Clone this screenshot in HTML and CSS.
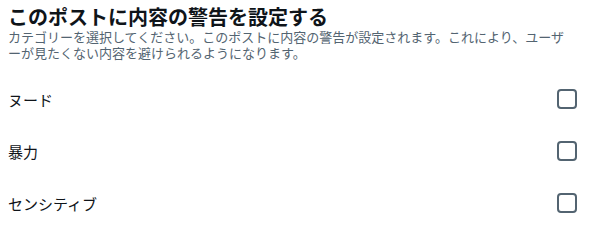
FILE: index.html
```html
<!DOCTYPE html>
<html lang="ja">
<head>
    <meta charset="UTF-8">
    <meta name="viewport" content="width=device-width, initial-scale=1.0">
    <title>内容の警告</title>
    <link rel="stylesheet" href="styles.css">
</head>
<body>

    <!-- Content warning panel -->
    <div class="panel">
        <h1 class="title">このポストに内容の警告を設定する</h1>
        <p class="desc">カテゴリーを選択してください。このポストに内容の警告が設定されます。これにより、ユーザーが見たくない内容を避けられるようになります。</p>

        <div class="options">
            <label class="option">
                <span class="option-label">ヌード</span>
                <input type="checkbox" class="check">
            </label>
            <label class="option">
                <span class="option-label">暴力</span>
                <input type="checkbox" class="check">
            </label>
            <label class="option">
                <span class="option-label">センシティブ</span>
                <input type="checkbox" class="check">
            </label>
        </div>
    </div>

</body>
</html>
```

FILE: styles.css
```css
body {
    margin: 0;
    background-color: #fff;
    font-family: "Noto Sans CJK JP", "Noto Sans", sans-serif;
    color: #0f1419;
}
.panel {
    padding: 5px 12px 0 8px;
}
.title {
    margin: 0;
    font-size: 20px;
    line-height: 24px;
    font-weight: 700;
}
.desc {
    margin: 0 8px 0 0;
    font-size: 13px;
    line-height: 16px;
    color: #536471;
}
.options {
    margin-top: 12px;
}
.option {
    display: flex;
    align-items: center;
    justify-content: space-between;
    height: 52px;
    font-size: 15px;
    cursor: pointer;
}
.check {
    appearance: none;
    width: 20px;
    height: 20px;
    margin: 0;
    border: 2px solid #536471;
    border-radius: 4px;
    cursor: pointer;
}
.check:checked {
    background-color: #1d9bf0;
    border-color: #1d9bf0;
}
```
